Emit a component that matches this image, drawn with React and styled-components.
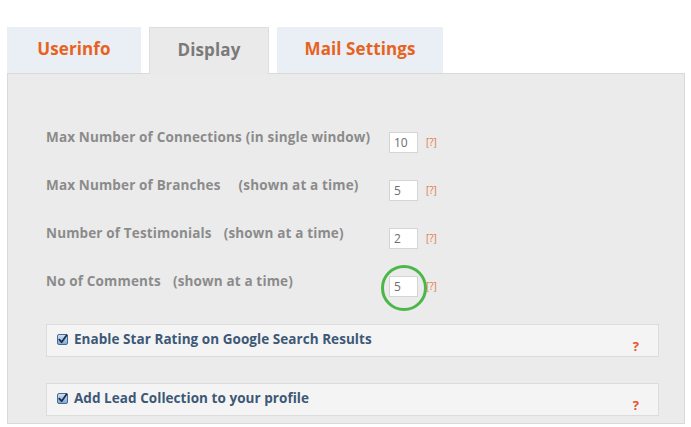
import React from "react";
import styled, { createGlobalStyle } from "styled-components";

const Global = createGlobalStyle`
  html, body { margin: 0; padding: 0; background: #ffffff; }
  body { font-family: "Open Sans", "DejaVu Sans", sans-serif; }
`;

const Page = styled.div`
  width: 691px;
  height: 427px;
  box-sizing: border-box;
  padding: 27px 6px 0 7px;
  overflow: hidden;
`;

const TabBar = styled.div`
  display: flex;
  gap: 8px;
  position: relative;
  z-index: 1;
`;

const Tab = styled.div`
  width: ${(p) => p.$w}px;
  box-sizing: border-box;
  display: flex;
  align-items: center;
  justify-content: center;
  padding-bottom: 4px;
  font-size: 17px;
  font-weight: 700;
  letter-spacing: 0.1px;
  color: ${(p) => (p.$active ? "#7a7a7a" : "#e8621f")};
  background: ${(p) => (p.$active ? "#eaeaea" : "#e9eff5")};
  border: 1px solid ${(p) => (p.$active ? "#dedede" : "#e9eff5")};
  border-bottom: none;
  margin-bottom: ${(p) => (p.$active ? "-1px" : "0")};
  height: ${(p) => (p.$active ? "47px" : "46px")};
`;

const Panel = styled.div`
  background: #ebebeb;
  border: 1px solid #d9d9d9;
  box-sizing: border-box;
  height: 351px;
  padding: 55px 25px 0 38px;
`;

const Row = styled.div`
  display: flex;
  align-items: flex-start;
  height: 48px;
`;

const Label = styled.div`
  width: 343px;
  font-size: 13.5px;
  line-height: 16px;
  font-weight: 700;
  letter-spacing: 0.15px;
  color: #8b8b8b;
  white-space: nowrap;
`;

const Note = styled.span`
  margin-left: ${(p) => p.$gap}px;
`;

const InputWrap = styled.div`
  position: relative;
  margin-top: 3px;
`;

const NumInput = styled.div`
  width: 29px;
  height: 21px;
  box-sizing: border-box;
  background: #ffffff;
  border: 1px solid #d4d4d4;
  font-size: 12px;
  line-height: 19px;
  color: #6a6d72;
  padding-left: 4px;
`;

const Help = styled.span`
  margin: 7px 0 0 8px;
  font-size: 10px;
  line-height: 12px;
  color: #e07a4a;
`;

const Circle = styled.div`
  position: absolute;
  left: 50%;
  top: 50%;
  width: 40px;
  height: 40px;
  margin-left: -23px;
  margin-top: -22px;
  border: 3px solid #4cb748;
  border-radius: 50%;
  pointer-events: none;
`;

const OptionBox = styled.div`
  width: 613px;
  height: 33px;
  box-sizing: border-box;
  background: #f4f4f4;
  border: 1px solid #dcdcdc;
  display: flex;
  justify-content: space-between;
  padding: 4px 19px 0 10px;
  margin-top: ${(p) => p.$top}px;
`;

const OptionLabel = styled.div`
  display: flex;
  align-items: center;
  align-self: flex-start;
  gap: 6px;
  font-size: 13.5px;
  line-height: 20px;
  font-weight: 700;
  letter-spacing: 0.05px;
  color: #3d5877;
`;

const QMark = styled.span`
  align-self: flex-end;
  margin-bottom: 2px;
  font-size: 13px;
  line-height: 16px;
  font-weight: 700;
  color: #e8531e;
`;

const Check = () => (
  <svg width="11" height="11" viewBox="0 0 11 11">
    <defs>
      <linearGradient id="cbg" x1="0" y1="0" x2="0" y2="1">
        <stop offset="0" stopColor="#cfe2f5" />
        <stop offset="1" stopColor="#7fa8d3" />
      </linearGradient>
    </defs>
    <rect x="0.5" y="0.5" width="10" height="10" rx="1.5" fill="url(#cbg)" stroke="#4b6b8e" />
    <path d="M2.3 5.6 L4.6 8.2 L9.6 1.2" fill="none" stroke="#1c2f4a" strokeWidth="1.8" strokeLinecap="round" strokeLinejoin="round" />
  </svg>
);

const rows = [
  { main: "Max Number of Connections", note: "(in single window)", gap: 4, value: "10" },
  { main: "Max Number of Branches", note: "(shown at a time)", gap: 18, value: "5" },
  { main: "Number of Testimonials", note: "(shown at a time)", gap: 12, value: "2" },
  { main: "No of Comments", note: "(shown at a time)", gap: 12, value: "5", circled: true },
];

export default function App() {
  return (
    <>
      <Global />
      <Page>
        <TabBar>
          <Tab $w={134}>Userinfo</Tab>
          <Tab $w={120} $active>Display</Tab>
          <Tab $w={166}>Mail Settings</Tab>
        </TabBar>
        <Panel>
          {rows.map((r) => (
            <Row key={r.main}>
              <Label>
                {r.main}
                <Note $gap={r.gap}>{r.note}</Note>
              </Label>
              <InputWrap>
                <NumInput>{r.value}</NumInput>
                {r.circled && <Circle />}
              </InputWrap>
              <Help>[?]</Help>
            </Row>
          ))}
          <OptionBox $top={3}>
            <OptionLabel>
              <Check />
              Enable Star Rating on Google Search Results
            </OptionLabel>
            <QMark>?</QMark>
          </OptionBox>
          <OptionBox $top={26}>
            <OptionLabel>
              <Check />
              Add Lead Collection to your profile
            </OptionLabel>
            <QMark>?</QMark>
          </OptionBox>
        </Panel>
      </Page>
    </>
  );
}
